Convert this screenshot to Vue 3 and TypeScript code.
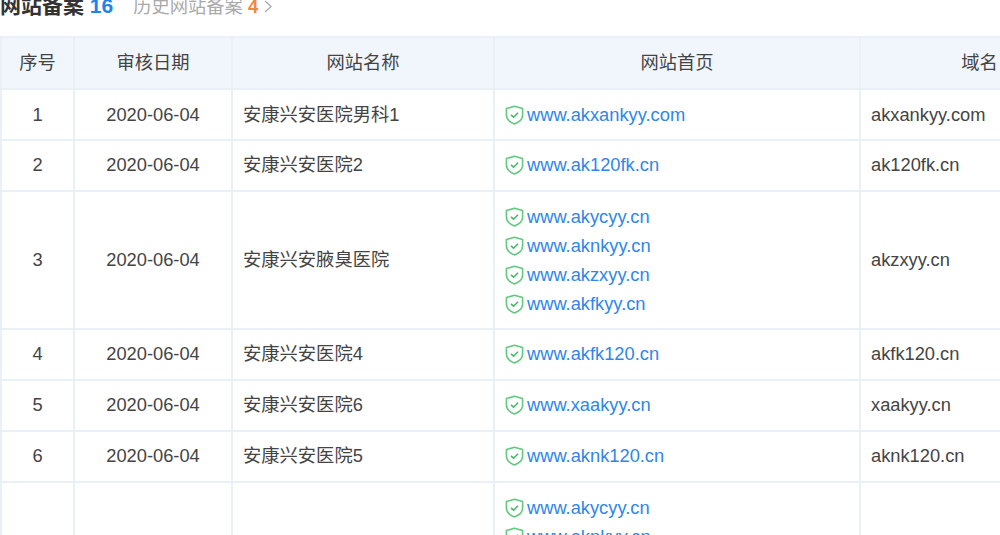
<script setup lang="ts">
interface Row {
  no: string;
  date: string;
  name: string;
  links: string[];
  domain: string;
  tall?: boolean;
}

const rows: Row[] = [
  { no: '1', date: '2020-06-04', name: '安康兴安医院男科1', links: ['www.akxankyy.com'], domain: 'akxankyy.com' },
  { no: '2', date: '2020-06-04', name: '安康兴安医院2', links: ['www.ak120fk.cn'], domain: 'ak120fk.cn' },
  { no: '3', date: '2020-06-04', name: '安康兴安腋臭医院', links: ['www.akycyy.cn', 'www.aknkyy.cn', 'www.akzxyy.cn', 'www.akfkyy.cn'], domain: 'akzxyy.cn', tall: true },
  { no: '4', date: '2020-06-04', name: '安康兴安医院4', links: ['www.akfk120.cn'], domain: 'akfk120.cn' },
  { no: '5', date: '2020-06-04', name: '安康兴安医院6', links: ['www.xaakyy.cn'], domain: 'xaakyy.cn' },
  { no: '6', date: '2020-06-04', name: '安康兴安医院5', links: ['www.aknk120.cn'], domain: 'aknk120.cn' },
  { no: '', date: '', name: '', links: ['www.akycyy.cn', 'www.aknkyy.cn', 'www.akzxyy.cn', 'www.akfkyy.cn'], domain: '', tall: true },
];
</script>

<template>
  <div class="page">
    <div class="title">
      <span class="current">网站备案 <b class="count">16</b></span>
      <span class="history">历史网站备案 <b class="hcount">4</b><svg class="chev" width="8" height="13" viewBox="0 0 8 13"><path d="M1 1l6 5.5L1 12" fill="none" stroke="#aaa" stroke-width="1.3" /></svg></span>
    </div>
    <table class="tbl">
      <colgroup>
        <col class="c1" /><col class="c2" /><col class="c3" /><col class="c4" /><col class="c5" />
      </colgroup>
      <thead>
        <tr>
          <th>序号</th>
          <th>审核日期</th>
          <th>网站名称</th>
          <th>网站首页</th>
          <th>域名</th>
        </tr>
      </thead>
      <tbody>
        <tr v-for="(r, i) in rows" :key="i" :class="{ tall: r.tall, first: i === 0 }">
          <td class="center">{{ r.no }}</td>
          <td class="center">{{ r.date }}</td>
          <td>{{ r.name }}</td>
          <td>
            <div v-for="l in r.links" :key="l" class="link">
              <svg class="shield" width="19" height="20" viewBox="0 0 19 20">
                <path d="M9.5 1.2L17.6 3.6V10c0 4.2-3.4 7.2-8.1 8.9C4.8 17.2 1.4 14.2 1.4 10V3.6z" fill="none" stroke="#62c97f" stroke-width="1.6" stroke-linejoin="round" />
                <path d="M6 9.8l2.6 2.4 4.4-4.4" fill="none" stroke="#45b868" stroke-width="1.6" />
              </svg>
              <a class="url">{{ l }}</a>
            </div>
          </td>
          <td>{{ r.domain }}</td>
        </tr>
      </tbody>
    </table>
  </div>
</template>

<style>
html,
body {
  margin: 0;
  background: #fff;
  overflow: hidden;
}
</style>

<style scoped>
.page {
  width: 1000px;
  height: 535px;
  overflow: hidden;
  font-family: "Liberation Sans", "Noto Sans CJK SC", sans-serif;
  font-size: 18.3px;
  color: #444;
}
.title {
  display: flex;
  align-items: baseline;
  height: 30px;
  line-height: 30px;
  margin-top: -9px;
  margin-bottom: 15px;
}
.current {
  font-size: 21px;
  font-weight: 700;
  color: #333;
}
.count {
  color: #1d85ea;
}
.history {
  margin-left: 20px;
  font-size: 18.3px;
  color: #aaa;
}
.hcount {
  color: #f5853a;
}
.chev {
  margin-left: 6px;
}
.tbl {
  table-layout: fixed;
  width: 1098px;
  border-collapse: collapse;
  border: 1px solid #e4edf6;
  line-height: 20px;
}
.c1 { width: 73px; }
.c2 { width: 158px; }
.c3 { width: 262px; }
.c4 { width: 366px; }
.c5 { width: 239px; }
th,
td {
  border: 2px solid #e9f0f8;
  padding: 0 10px;
  text-align: left;
  vertical-align: middle;
}
th {
  height: 50px;
  background: #f0f6fc;
  font-weight: 400;
  text-align: center;
}
td {
  height: 48px;
  padding-bottom: 1px;
  border-top-width: 1px;
}
.center {
  text-align: center;
}
.first td {
  height: 49px;
  padding-bottom: 0;
}
.tall td {
  height: 136px;
  padding-bottom: 0;
}
.link {
  display: flex;
  align-items: center;
  height: 29px;
}
.shield {
  flex: none;
  margin-right: 3px;
}
.url {
  color: #2e86ea;
}
</style>
